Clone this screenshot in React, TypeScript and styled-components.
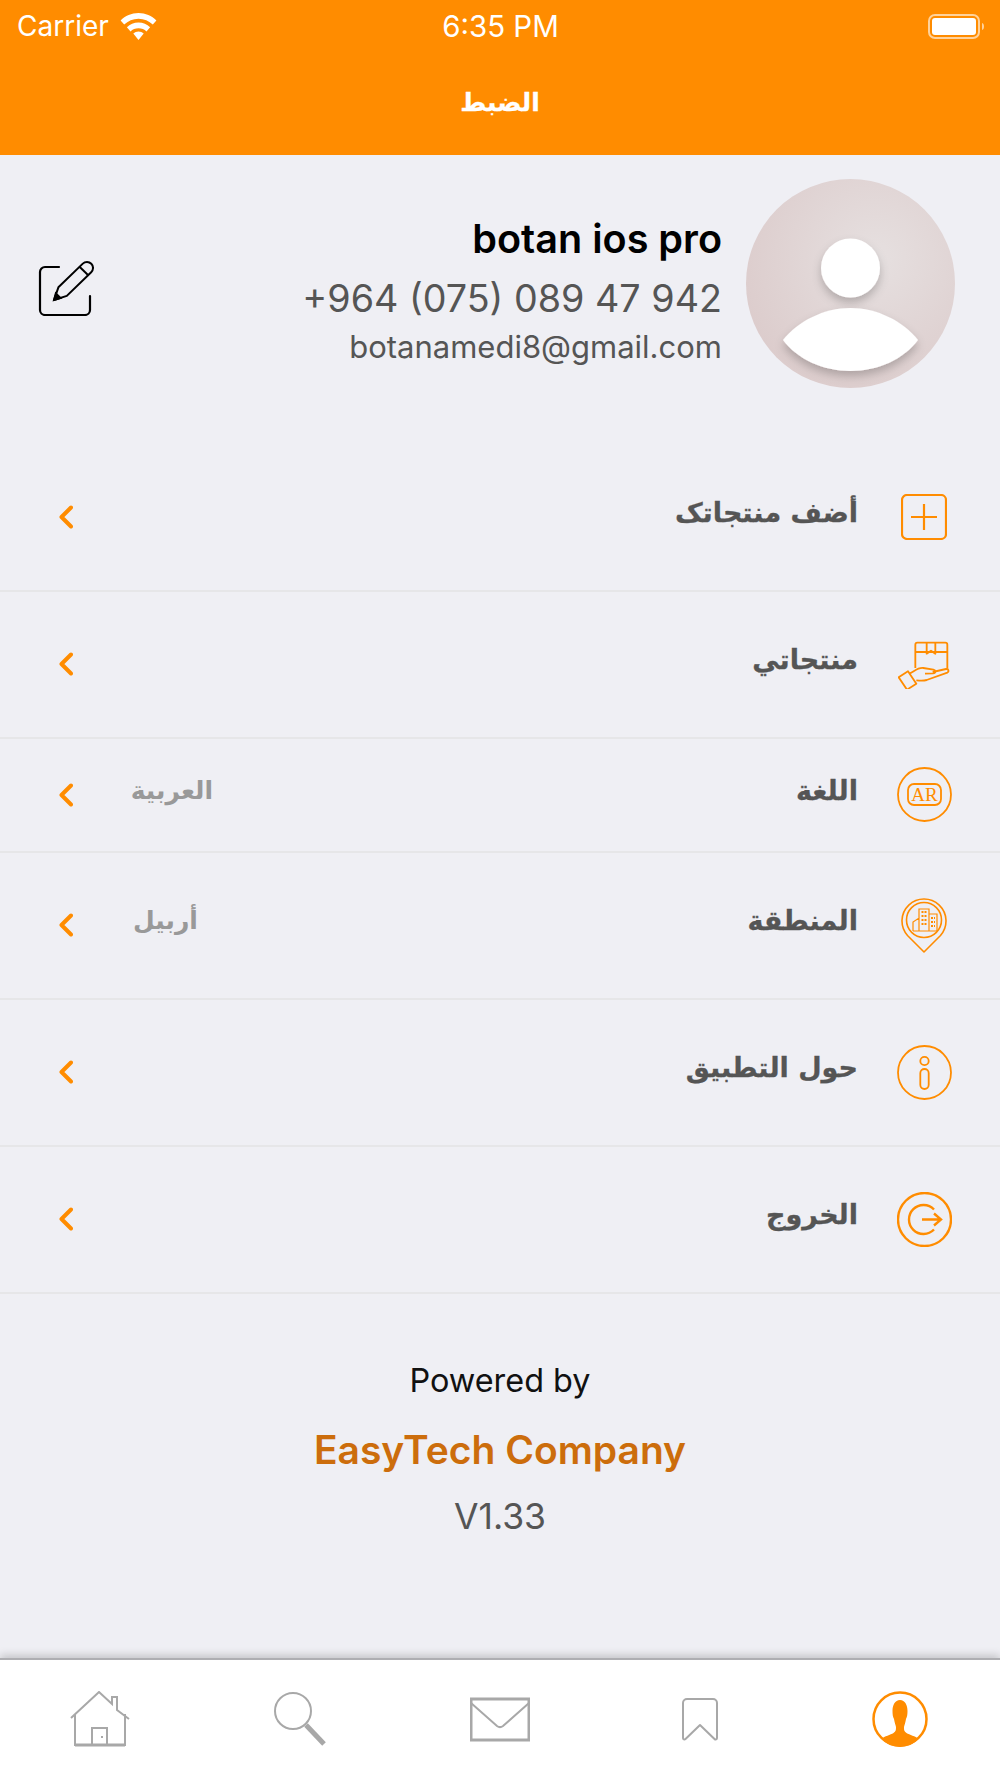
import styled, { createGlobalStyle } from 'styled-components'

const ORANGE = '#ff8c00'
const GREY = '#a8a8a8'
const ARABIC = '"DejaVu Sans", "Noto Sans", sans-serif'
const LATIN = 'Inter, "Liberation Sans", sans-serif'

const GlobalStyle = createGlobalStyle`
  html, body {
    margin: 0;
    padding: 0;
    background: #efeff4;
  }
  * {
    box-sizing: border-box;
  }
`

const Screen = styled.div`
  min-height: 1778px;
  display: flex;
  flex-direction: column;
  font-family: ${LATIN};
  background: #efeff4;
`

const Header = styled.header`
  height: 155px;
  background: ${ORANGE};
  color: #fff;
  display: flex;
  flex-direction: column;
`

const StatusBar = styled.div`
  height: 50px;
  padding: 2px 16px 0 17px;
  display: grid;
  grid-template-columns: 1fr auto 1fr;
  align-items: center;
  font-size: 28px;
  line-height: 48px;
`

const StatusLeft = styled.div`
  display: flex;
  align-items: center;
  gap: 11px;
`

const StatusTime = styled.div`
  font-size: 29.500px;
`

const StatusRight = styled.div`
  display: flex;
  justify-content: flex-end;
`

const NavTitle = styled.h1`
  margin: 0;
  height: 105px;
  padding-bottom: 1px;
  display: flex;
  align-items: center;
  justify-content: center;
  font-family: ${ARABIC};
  font-size: 25px;
  font-weight: 700;
  -webkit-text-stroke: 0.3px #fff;
`

const Main = styled.main`
  flex: 1;
  display: flex;
  flex-direction: column;
`

const Profile = styled.section`
  height: 290px;
  padding: 24px 45px 0 38px;
  display: flex;
  align-items: flex-start;
  justify-content: space-between;
`

const EditButton = styled.div`
  margin-top: 81px;
  display: flex;
`

const ProfileRight = styled.div`
  display: flex;
  gap: 24px;
`

const ProfileText = styled.div`
  padding-top: 35px;
  display: flex;
  flex-direction: column;
  align-items: flex-end;
`

const Name = styled.div`
  font-size: 39.600px;
  line-height: 50px;
  font-weight: 600;
  color: #000;
`

const Phone = styled.div`
  margin-top: 9px;
  font-size: 37.700px;
  line-height: 50px;
  color: #555;
`

const Email = styled.div`
  margin-top: 1px;
  font-size: 31px;
  line-height: 46px;
  color: #555;
`

const Row = styled.div<{ $height: number }>`
  height: ${p => p.$height}px;
  direction: rtl;
  display: flex;
  align-items: center;
  padding: 0 46px 1px 59px;
  border-bottom: 2px solid #e6e6e8;
`

const RowIcon = styled.div`
  width: 60px;
  margin-left: 36px;
  display: flex;
  justify-content: center;
`

const RowLabel = styled.div`
  flex: 1;
  padding-bottom: 9px;
  font-family: ${ARABIC};
  font-size: 27px;
  font-weight: 700;
  color: #555;
  -webkit-text-stroke: 0.3px #555;
`

const RowValue = styled.div`
  width: 80px;
  margin-left: 60px;
  padding-bottom: 9px;
  font-family: ${ARABIC};
  font-size: 25px;
  font-weight: 700;
  text-align: left;
  color: #999;
`

const Footer = styled.footer`
  padding-top: 65px;
  display: flex;
  flex-direction: column;
  align-items: center;
`

const PoweredBy = styled.div`
  font-size: 32.400px;
  line-height: 44px;
  color: #111;
`

const Company = styled.div`
  margin-top: 22px;
  font-size: 39px;
  line-height: 50px;
  font-weight: 600;
  color: #cc6d0c;
`

const Version = styled.div`
  margin-top: 19px;
  font-size: 35.500px;
  line-height: 46px;
  color: #555;
`

const TabBar = styled.nav`
  height: 120px;
  background: #fff;
  border-top: 2px solid #aeaeb2;
  box-shadow: 0 -3px 8px rgba(0, 0, 0, 0.18);
  display: grid;
  grid-template-columns: repeat(5, 1fr);
`

const Tab = styled.div`
  display: flex;
  align-items: center;
  justify-content: center;
`

const Line = styled.svg.attrs({ fill: 'none', xmlns: 'http://www.w3.org/2000/svg' })`
  display: block;
  flex: none;
`

const Wifi = () => (
  <Line width={37} height={27} viewBox="0 0 37 27" fill="#fff">
    <path d="M18.5 0C11.5 0 5.2 2.8.6 7.4l3.6 4.2C8 8 13 5.8 18.5 5.8S29 8 32.8 11.6l3.6-4.2C31.8 2.8 25.500 0 18.5 0z" fill="#fff" />
    <path d="M18.5 9.500c-4.500 0-8.600 1.800-11.600 4.700l3.600 4.200c2-2 4.900-3.200 8-3.200s6 1.200 8 3.200l3.600-4.200c-3-2.900-7.100-4.700-11.600-4.700z" fill="#fff" />
    <path d="M18.5 18.500c-2 0-3.800.8-5.200 2l5.200 6.500 5.200-6.500c-1.400-1.200-3.200-2-5.200-2z" fill="#fff" />
  </Line>
)

const Battery = () => (
  <Line width={56} height={28} viewBox="0 0 56 28">
    <rect x="1" y="3" width="50" height="23" rx="6" stroke="#ffd29c" strokeWidth="2" />
    <rect x="4" y="6" width="44" height="17" rx="3" fill="#fff" />
    <path d="M54 11c1.500.6 2 1.800 2 3.500s-.5 2.900-2 3.500z" fill="#ffd29c" />
  </Line>
)

const EditIcon = () => (
  <Line width={56} height={56} viewBox="0 0 56 56" stroke="#000" strokeWidth="2">
    <path d="M21 7H7a5 5 0 0 0-5 5v38a5 5 0 0 0 5 5h40a5 5 0 0 0 5-5V36" strokeLinecap="round" strokeWidth="2.200" />
    <path d="M16 40L20.400 27.300 44.800 3.600a6 6 0 0 1 8.400 8.600L28.800 35.900z" strokeLinejoin="round" />
    <path d="M41.500 6.800L50 15" />
    <path d="M16 40l1.800-6.500 4.700 4.600z" fill="#000" />
  </Line>
)

const Avatar = () => (
  <Line width={209} height={209} viewBox="0 0 209 209">
    <defs>
      <radialGradient id="avatarBg" cx="62%" cy="38%" r="68%">
        <stop offset="0%" stopColor="#e6e0e0" />
        <stop offset="100%" stopColor="#dccccc" />
      </radialGradient>
      <filter id="soft" x="-30%" y="-30%" width="160%" height="160%">
        <feDropShadow dx="0" dy="5" stdDeviation="5" floodColor="#000" floodOpacity="0.22" />
      </filter>
    </defs>
    <circle cx="104.500" cy="104.500" r="104.500" fill="url(#avatarBg)" />
    <circle cx="104.500" cy="89" r="29.500" fill="#fff" filter="url(#soft)" />
    <path d="M37 161C52 142 78 129 104.500 129S157 142 172 161C158 180 132 192 104.500 192S51 180 37 161z" fill="#fff" filter="url(#soft)" />
  </Line>
)

const PlusIcon = () => (
  <Line width={46} height={46} viewBox="0 0 46 46" stroke={ORANGE} strokeWidth="2.200">
    <rect x="1" y="1" width="44" height="44" rx="5" />
    <path d="M10 23h26M23 10v26" />
  </Line>
)

const BoxHandIcon = () => (
  <Line width={52} height={49} viewBox="0 -6 156 147" stroke={ORANGE} strokeWidth="5.500" strokeLinejoin="round">
    <path d="M52 78V8a6 6 0 0 1 6-6h84a6 6 0 0 1 6 6v72" />
    <path d="M52 30h96M86 3v32l13-9 13 9V3" />
    <path d="M2 106l28-18 25 37-28 18z" />
    <path d="M36 94c14-7 24-18 40-16l30 5c8 2 8 10-1 11l-24 1" />
    <path d="M104 90l40-9c8-1 10 8 4 11l-62 22c-10 3-20 2-31 1" />
  </Line>
)

const LanguageIcon = () => (
  <Line width={55} height={55} viewBox="0 0 55 55" stroke={ORANGE} strokeWidth="1.800">
    <circle cx="27.500" cy="27.500" r="26.500" />
    <rect x="11" y="17" width="33" height="21" rx="6" />
    <text x="27.500" y="33.500" textAnchor="middle" fontFamily='"Liberation Serif", serif' fontSize="19" fill={ORANGE} stroke="none">
      AR
    </text>
  </Line>
)

const PinIcon = () => (
  <Line width={46} height={55} viewBox="0 0 46 55" stroke={ORANGE} strokeWidth="1.600">
    <path d="M23 54L6.500 37.500A22 22 0 1 1 39.500 37.500z" strokeLinejoin="round" />
    <circle cx="23" cy="22" r="17.500" />
    <path d="M12 33v-9l6-4v13M18 33V11h10v22M28 33V16h8v17zM12 33h16" strokeWidth="1.200" />
    <path d="M20.500 14h5M20.500 18h5M20.500 22h5M20.500 26h5M30 20h4M30 24h4M30 28h4" strokeWidth="2" strokeDasharray="2 1" />
  </Line>
)

const InfoIcon = () => (
  <Line width={55} height={55} viewBox="0 0 55 55" stroke={ORANGE} strokeWidth="1.800">
    <circle cx="27.500" cy="27.500" r="26.500" />
    <circle cx="27.500" cy="16" r="4.200" />
    <rect x="23.300" y="24" width="8.400" height="20" rx="4.200" />
  </Line>
)

const LogoutIcon = () => (
  <Line width={55} height={55} viewBox="0 0 55 55" stroke={ORANGE} strokeWidth="2.400">
    <circle cx="27.500" cy="27.500" r="26.500" />
    <path d="M37 17.500A14.500 14.500 0 1 0 37 37.500" />
    <path d="M25 27.500h19M37 21.500l7 6-7 6" />
  </Line>
)

const Chevron = () => (
  <Line width={14} height={24} viewBox="0 0 14 24" stroke={ORANGE} strokeWidth="4" strokeLinecap="round" strokeLinejoin="round">
    <path d="M12 2.500L2.500 12l9.500 9.500" />
  </Line>
)

const HomeIcon = () => (
  <Line width={60} height={56} viewBox="0 0 60 56" stroke={GREY} strokeWidth="2">
    <path d="M1 27L29 1l13 12V6h5v13l12 9" />
    <path d="M5 23v31h50V23" />
    <path d="M22 55V37h15v18" />
    <path d="M5 54h50" strokeWidth="3" />
    <path d="M31 46h2" />
  </Line>
)

const SearchIcon = () => (
  <Line width={52} height={54} viewBox="0 0 52 54" stroke={GREY} strokeWidth="2">
    <circle cx="19" cy="19" r="18" />
    <path d="M32 33l18 19" strokeWidth="5" />
  </Line>
)

const MailIcon = () => (
  <Line width={60} height={45} viewBox="0 0 60 45" stroke={GREY} strokeWidth="2">
    <rect x="1" y="2" width="58" height="41" strokeWidth="3" />
    <path d="M1 6l26 23c2 1.500 4 1.500 6 0L59 6" />
  </Line>
)

const BookmarkIcon = () => (
  <Line width={36} height={44} viewBox="0 0 36 44" stroke={GREY} strokeWidth="2">
    <path d="M1 41V6a4 4 0 0 1 4-4h26a4 4 0 0 1 4 4v35c0 1.500-1.500 2-2.500 1L18 28 3.500 42C2.500 43 1 42.500 1 41z" strokeLinejoin="round" />
  </Line>
)

const ProfileTabIcon = () => (
  <Line width={56} height={56} viewBox="0 0 56 56">
    <circle cx="28" cy="28" r="26.500" stroke={ORANGE} strokeWidth="2.500" />
    <path
      d="M28 9c-5 0-7.500 5-7.500 11 0 3 .3 6 1.500 8 .5 3 1.500 6 2 8 0 3 0 4-2.500 6-3 2-9 3-12 6 4.500 5 12 8 18.500 8s14-3 18.500-8c-3-3-9-4-12-6-2.500-2-2.500-3-2.500-6 .5-2 1.500-5 2-8 1.200-2 1.500-5 1.500-8 0-6-2.500-11-7.500-11z"
      fill={ORANGE}
    />
  </Line>
)

const rows = [
  { label: 'أضف منتجاتک', height: 147, icon: <PlusIcon /> },
  { label: 'منتجاتي', height: 147, icon: <BoxHandIcon /> },
  { label: 'اللغة', value: 'العربية', height: 114, icon: <LanguageIcon /> },
  { label: 'المنطقة', value: 'أربيل', height: 147, icon: <PinIcon /> },
  { label: 'حول التطبيق', height: 147, icon: <InfoIcon /> },
  { label: 'الخروج', height: 147, icon: <LogoutIcon /> }
]

const App = (): JSX.Element => (
  <Screen>
    <GlobalStyle />
    <Header>
      <StatusBar>
        <StatusLeft>
          Carrier
          <Wifi />
        </StatusLeft>
        <StatusTime>6:35 PM</StatusTime>
        <StatusRight>
          <Battery />
        </StatusRight>
      </StatusBar>
      <NavTitle dir="rtl">الضبط</NavTitle>
    </Header>
    <Main>
      <Profile>
        <EditButton>
          <EditIcon />
        </EditButton>
        <ProfileRight>
          <ProfileText>
            <Name>botan ios pro</Name>
            <Phone>+964 (075) 089 47 942</Phone>
            <Email>botanamedi8@gmail.com</Email>
          </ProfileText>
          <Avatar />
        </ProfileRight>
      </Profile>
      {rows.map(row => (
        <Row key={row.label} $height={row.height}>
          <RowIcon>{row.icon}</RowIcon>
          <RowLabel>{row.label}</RowLabel>
          {row.value && <RowValue>{row.value}</RowValue>}
          <Chevron />
        </Row>
      ))}
      <Footer>
        <PoweredBy>Powered by</PoweredBy>
        <Company>EasyTech Company</Company>
        <Version>V1.33</Version>
      </Footer>
    </Main>
    <TabBar>
      <Tab>
        <HomeIcon />
      </Tab>
      <Tab>
        <SearchIcon />
      </Tab>
      <Tab>
        <MailIcon />
      </Tab>
      <Tab>
        <BookmarkIcon />
      </Tab>
      <Tab>
        <ProfileTabIcon />
      </Tab>
    </TabBar>
  </Screen>
)

export default App
